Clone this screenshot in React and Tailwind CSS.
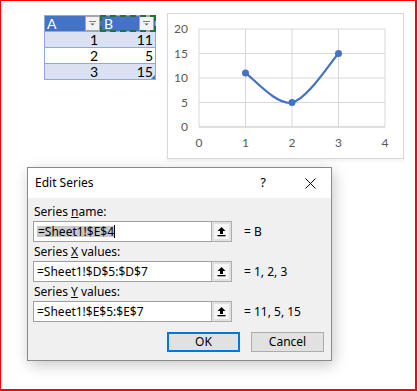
import React from 'react';

const UI_FONT = { fontFamily: '"Segoe UI", "Noto Sans", sans-serif' };
const SHEET_FONT = { fontFamily: 'Lato, "Liberation Sans", sans-serif' };

const rows = [
    { a: 1, b: 11, band: true },
    { a: 2, b: 5, band: false },
    { a: 3, b: 15, band: true },
];

const FilterButton = () => (
    <div className="w-[15px] h-[15px] bg-[#f2f2f2] border border-[#a6a6a6] flex items-center justify-center">
        <svg width="9" height="7" viewBox="0 0 9 7">
            <rect x="1" y="1" width="7" height="1" fill="#7f7f7f" />
            <path d="M2.5 3.5 L6.5 3.5 L4.5 5.5 Z" fill="#595959" />
        </svg>
    </div>
);

const SheetTable = () => (
    <div className="w-[112px] mt-[2px] border border-[#8ea9db] text-[14px] leading-none" style={SHEET_FONT}>
        <div className="flex h-[15px] bg-[#4472c4] text-white">
            <div className="w-[56px] flex items-center justify-between pl-[2px] pr-[1px]">
                <span>A</span>
                <FilterButton />
            </div>
            <div className="relative flex-1 flex items-center justify-between pl-[3px] pr-[1px]">
                <span>B</span>
                <FilterButton />
                <div className="absolute -top-[1px] -left-[1px] -right-[1px] -bottom-[1px] border-2 border-dashed border-[#217346]"></div>
            </div>
        </div>
        {rows.map((r, i) => (
            <div key={i} className={`flex h-[16px] border-t border-[#8ea9db] ${r.band ? 'bg-[#d9e1f2]' : 'bg-white'}`}>
                <div className="w-[56px] flex items-center justify-end pr-[3px]">{r.a}</div>
                <div className="relative flex-1 flex items-center justify-end pr-[2px]">
                    {r.b}
                    {i === rows.length - 1 && (
                        <svg className="absolute right-0 bottom-0" width="4" height="4" viewBox="0 0 4 4">
                            <path d="M4 0 L4 4 L0 4 Z" fill="#4472c4" />
                        </svg>
                    )}
                </div>
            </div>
        ))}
    </div>
);

const gx = [31, 77.5, 124, 170.5, 217];
const gy = [15, 39.5, 64, 88.5, 113];

const LineChart = () => (
    <div className="ml-[11px] w-[237px] h-[146px] border border-[#d9d9d9] bg-white shadow-[0_2px_3px_rgba(0,0,0,0.06)]">
        <svg width="235" height="144" viewBox="0 0 235 144" style={SHEET_FONT}>
            {gy.slice(0, 4).map((y) => (
                <line key={y} x1={31} x2={217} y1={y} y2={y} stroke="#d9d9d9" strokeWidth="1" />
            ))}
            {gx.map((x) => (
                <line key={x} x1={x} x2={x} y1={15} y2={113} stroke="#d9d9d9" strokeWidth="1" />
            ))}
            <line x1={31} x2={217} y1={113} y2={113} stroke="#bfbfbf" strokeWidth="1" />
            {['20', '15', '10', '5', '0'].map((t, i) => (
                <text key={t} x="20" y={gy[i] + 4} textAnchor="end" fontSize="12" fill="#595959">{t}</text>
            ))}
            {gx.map((x, i) => (
                <text key={x} x={x} y="133" textAnchor="middle" fontSize="12" fill="#595959">{i}</text>
            ))}
            <path
                d="M77.5 59.1 C85.25 64 108.5 91.8 124 88.5 C139.5 85.2 162.75 47.7 170.5 39.5"
                fill="none"
                stroke="#4472c4"
                strokeWidth="2.25"
                strokeLinecap="round"
            />
            <circle cx="77.5" cy="59.1" r="3.5" fill="#4472c4" />
            <circle cx="124" cy="88.5" r="3.5" fill="#4472c4" />
            <circle cx="170.5" cy="39.5" r="3.5" fill="#4472c4" />
        </svg>
    </div>
);

const PickButton = () => (
    <div className="w-[21px] h-[21px] bg-[#e1e1e1] border border-[#adadad] flex items-center justify-center">
        <div className="w-[15px] h-[15px] bg-[#f5f5f5] flex items-center justify-center">
            <svg width="11" height="11" viewBox="0 0 11 11">
                <path d="M5.5 1 L9.5 5 L7 5 L7 8 L4 8 L4 5 L1.5 5 Z" fill="#000" />
                <rect x="1.5" y="9" width="8" height="1.3" fill="#000" />
            </svg>
        </div>
    </div>
);

const RefField = ({ label, hotkey, rest, value, result, selected, first }) => (
    <>
        <div className={`h-[16px] pl-[1px] flex items-center ${first ? '' : 'mt-[2px]'}`}>
            <span className="whitespace-pre">{label}<span className="underline">{hotkey}</span>{rest}</span>
        </div>
        <div className="mt-[1px] flex items-center">
            <div className="w-[178px] h-[21px] bg-white border border-[#a0a0a0] border-r-0 flex items-center pl-[3px]">
                {selected ? (
                    <>
                        <span className="bg-[#c8c8c8] pl-[1px] leading-[11px] h-[11px]">{value}</span>
                        <span className="w-px h-[13px] bg-black"></span>
                    </>
                ) : (
                    <span>{value}</span>
                )}
            </div>
            <PickButton />
            <span className="ml-[12px]">{result}</span>
        </div>
    </>
);

const EditSeriesDialog = () => (
    <div
        className="ml-[26px] mt-[8px] w-[305px] h-[194px] border border-[#8a8a8a] bg-[#f0f0f0] text-[12px] text-black shadow-[2px_4px_14px_rgba(0,0,0,0.22)]"
        style={UI_FONT}
    >
        <div className="h-[30px] bg-white flex items-center pl-[7px] pr-[15px]">
            <span className="flex-1">Edit Series</span>
            <span className="text-[13px] mr-[39px]">?</span>
            <svg width="11" height="11" viewBox="0 0 11 11">
                <path d="M0.5 0.5 L10.5 10.5 M10.5 0.5 L0.5 10.5" stroke="#000" strokeWidth="1" />
            </svg>
        </div>
        <div className="pt-[6px] pl-[5px] pr-[7px]">
            <RefField first label="Series " hotkey="n" rest="ame:" value="=Sheet1!$E$4" result="= B" selected />
            <RefField label="Series " hotkey="X" rest=" values:" value="=Sheet1!$D$5:$D$7" result="= 1, 2, 3" />
            <RefField label="Series " hotkey="Y" rest=" values:" value="=Sheet1!$E$5:$E$7" result="= 11, 5, 15" />
            <div className="mt-[10px] flex justify-end gap-[11px]">
                <button className="w-[73px] h-[20px] bg-[#e1e1e1] border-2 border-[#0078d7] flex items-center justify-center">OK</button>
                <button className="w-[73px] h-[20px] bg-[#e1e1e1] border border-[#adadad] flex items-center justify-center">Cancel</button>
            </div>
        </div>
    </div>
);

export default function App() {
    return (
        <div className="w-[417px] h-[391px] bg-white border-[#ff0000] border-l border-t border-r-2 border-b-2 overflow-hidden">
            <div className="flex items-start pt-[12px] pl-[43px]">
                <SheetTable />
                <LineChart />
            </div>
            <EditSeriesDialog />
        </div>
    );
}
